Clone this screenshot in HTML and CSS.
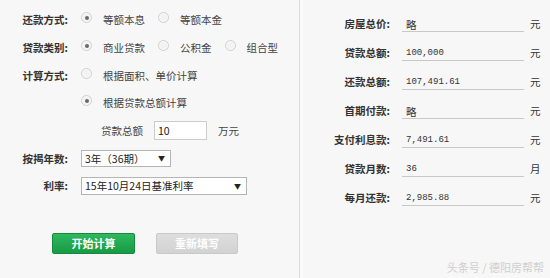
FILE: index.html
```html
<!DOCTYPE html>
<html lang="zh-CN">
<head>
    <meta charset="UTF-8">
    <title>房贷计算器</title>
    <link rel="stylesheet" href="styles.css">
</head>
<body>
    <div class="calc">
        <div class="left">
            <div class="row">
                <span class="label">还款方式:</span>
                <div class="field">
                    <span class="opt"><i class="radio on"></i>等额本息</span>
                    <span class="opt"><i class="radio"></i>等额本金</span>
                </div>
            </div>
            <div class="row">
                <span class="label">贷款类别:</span>
                <div class="field">
                    <span class="opt"><i class="radio on"></i>商业贷款</span>
                    <span class="opt"><i class="radio"></i>公积金</span>
                    <span class="opt"><i class="radio"></i>组合型</span>
                </div>
            </div>
            <div class="row">
                <span class="label">计算方式:</span>
                <div class="field">
                    <span class="opt"><i class="radio"></i>根据面积、单价计算</span>
                </div>
            </div>
            <div class="row">
                <span class="label"></span>
                <div class="field">
                    <span class="opt"><i class="radio on"></i>根据贷款总额计算</span>
                </div>
            </div>
            <div class="row">
                <span class="label"></span>
                <div class="field amount">
                    <span>贷款总额</span>
                    <span class="input">10</span>
                    <span>万元</span>
                </div>
            </div>
            <div class="row">
                <span class="label">按揭年数:</span>
                <div class="field">
                    <span class="select years">3年（36期）<b class="arrow">▼</b></span>
                </div>
            </div>
            <div class="row">
                <span class="label">利率:</span>
                <div class="field">
                    <span class="select rate">15年10月24日基准利率<b class="arrow">▼</b></span>
                </div>
            </div>
            <div class="buttons">
                <button class="btn btn-go">开始计算</button>
                <button class="btn btn-reset">重新填写</button>
            </div>
        </div>
        <div class="right">
            <div class="rrow"><span class="rlabel">房屋总价:</span><span class="value">略</span><span class="unit">元</span></div>
            <div class="rrow"><span class="rlabel">贷款总额:</span><span class="value num">100,000</span><span class="unit">元</span></div>
            <div class="rrow"><span class="rlabel">还款总额:</span><span class="value num">107,491.61</span><span class="unit">元</span></div>
            <div class="rrow"><span class="rlabel">首期付款:</span><span class="value">略</span><span class="unit">元</span></div>
            <div class="rrow"><span class="rlabel">支付利息款:</span><span class="value num">7,491.61</span><span class="unit">元</span></div>
            <div class="rrow"><span class="rlabel">贷款月数:</span><span class="value num">36</span><span class="unit">月</span></div>
            <div class="rrow"><span class="rlabel">每月还款:</span><span class="value num">2,985.88</span><span class="unit">元</span></div>
        </div>
        <div class="watermark">头条号 / 德阳房帮帮</div>
    </div>
</body>
</html>
```

FILE: styles.css
```css
body {
    margin: 0;
    background: #f7f7f7;
    font-family: "Noto Sans CJK SC", "Liberation Sans", sans-serif;
    font-size: 10.5px;
    color: #444444;
}
.calc {
    display: flex;
    height: 278px;
    position: relative;
}
.left {
    width: 299px;
    padding-top: 6px;
    border-right: 1px solid #dadada;
    box-shadow: 3px 0 0 #fbfbfb;
}
.row {
    display: flex;
    align-items: center;
    height: 27.7px;
}
.label {
    width: 68px;
    flex-shrink: 0;
    text-align: right;
    font-weight: bold;
    color: #333333;
}
.field {
    display: flex;
    align-items: center;
    margin-left: 13px;
    white-space: nowrap;
}
.opt {
    display: flex;
    align-items: center;
    margin-right: 13px;
}
.radio {
    width: 9px;
    height: 9px;
    border-radius: 50%;
    border: 1px solid #cfcfcf;
    background: radial-gradient(circle, #f2f2f2 40%, #ffffff 100%);
    margin-right: 11px;
    position: relative;
    top: -2px;
    display: flex;
    align-items: center;
    justify-content: center;
}
.radio.on::after {
    content: "";
    width: 4px;
    height: 4px;
    border-radius: 50%;
    background: #6a6a6a;
}
.amount {
    margin-left: 33px;
}
.input {
    width: 48px;
    height: 17px;
    line-height: 17px;
    margin: 0 11px 0 11px;
    padding-left: 3px;
    background: #ffffff;
    border: 1px solid #cccccc;
    color: #222222;
}
.select {
    display: flex;
    align-items: center;
    justify-content: space-between;
    height: 15px;
    padding: 0 5px 0 3px;
    background: #ffffff;
    border: 1px solid #b5b5b5;
    color: #222222;
}
.years {
    width: 80px;
}
.rate {
    width: 156px;
    height: 16px;
}
.arrow {
    font-size: 7px;
    font-weight: normal;
    color: #222222;
}
.buttons {
    display: flex;
    gap: 21px;
    margin: 33px 0 0 52px;
}
.btn {
    width: 83px;
    height: 21px;
    padding: 0;
    font-family: inherit;
    font-size: 11px;
    font-weight: bold;
    color: #ffffff;
    border-radius: 2px;
}
.btn-go {
    background: linear-gradient(to bottom, #2fb85e, #179a44);
    border: 1px solid #168a3d;
}
.btn-reset {
    width: 82px;
    background: linear-gradient(to bottom, #dedede, #d2d2d2);
    border: 1px solid #c9c9c9;
}
.right {
    flex: 1;
    padding-top: 8.5px;
}
.rrow {
    display: flex;
    align-items: center;
    height: 29px;
}
.rlabel {
    width: 90px;
    text-align: right;
    font-weight: bold;
    color: #333333;
}
.value {
    width: 118px;
    height: 14px;
    margin-left: 12px;
    padding-left: 4px;
    border-bottom: 1px solid #c8c8c8;
    color: #333333;
    position: relative;
    top: 1px;
}
.num {
    font-family: "Liberation Mono", monospace;
    font-size: 9px;
    line-height: 15px;
}
.unit {
    margin-left: 6px;
    color: #333333;
}
.watermark {
    position: absolute;
    right: 6px;
    bottom: 3px;
    font-size: 11px;
    color: #cfcfcf;
}
```
